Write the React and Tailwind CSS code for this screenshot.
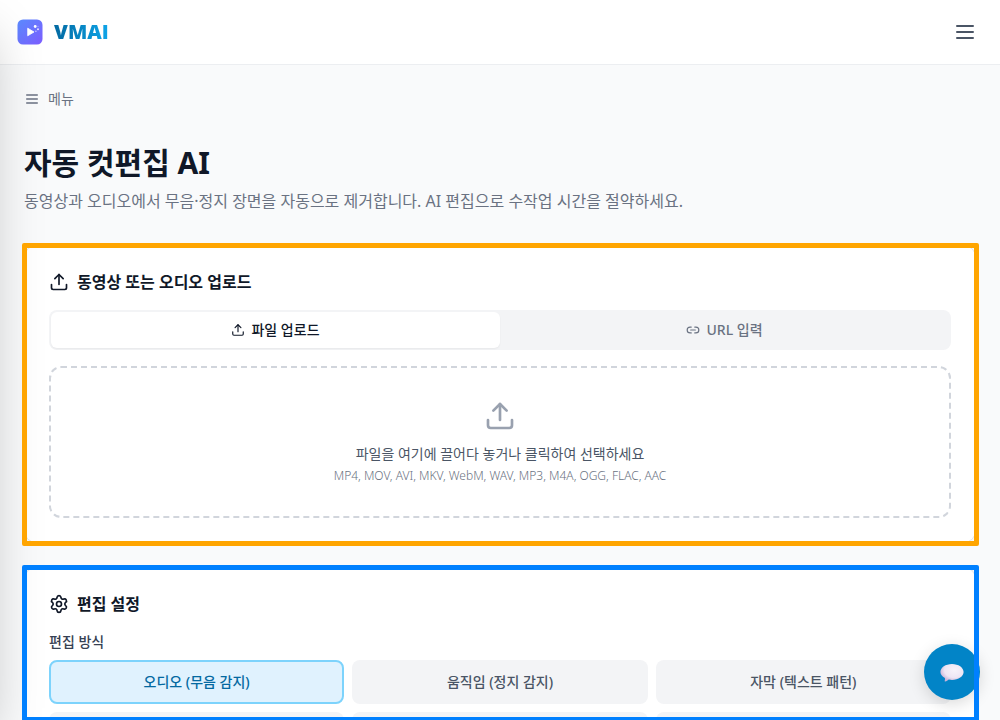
import { useState } from "react";
import { Link2, Settings, Upload } from "lucide-react";

const MODES = ["오디오 (무음 감지)", "움직임 (정지 감지)", "자막 (텍스트 패턴)"];

function Logo() {
  return (
    <svg viewBox="0 0 26 26" className="size-[26px]" aria-hidden="true">
      <defs>
        <linearGradient id="logo-fill" x1="0" y1="0" x2="1" y2="1">
          <stop offset="0" stopColor="#5b8cff" />
          <stop offset="1" stopColor="#7c5cff" />
        </linearGradient>
      </defs>
      <rect x="0.5" y="0.5" width="25" height="25" rx="5.5" fill="url(#logo-fill)" />
      <path d="M10.700 9.200v7.600l6.300-3.800z" fill="#fff" stroke="#fff" strokeWidth="0.8" strokeLinejoin="round" />
      <circle cx="18.2" cy="7.5" r="1.400" fill="#fff" />
      <circle cx="21" cy="10.300" r="0.95" fill="#fff" opacity="0.85" />
      <circle cx="18.900" cy="12.200" r="0.7" fill="#fff" opacity="0.7" />
      <circle cx="21" cy="7.300" r="0.5" fill="#fff" opacity="0.6" />
    </svg>
  );
}

function MenuIcon({ className }) {
  return (
    <svg viewBox="0 0 24 24" fill="none" stroke="currentColor" strokeWidth="2" strokeLinecap="round" className={className} aria-hidden="true">
      <path d="M4 6h16M4 12h16M4 18h16" />
    </svg>
  );
}

function SpeechBubble() {
  return (
    <svg viewBox="0 0 24 20" className="h-5 w-6" aria-hidden="true">
      <defs>
        <radialGradient id="bubble-fill" cx="0.6" cy="0.35" r="0.65">
          <stop offset="0" stopColor="#f7f3fa" />
          <stop offset="0.65" stopColor="#eee6f4" />
          <stop offset="1" stopColor="#c8b2d8" />
        </radialGradient>
      </defs>
      <path d="M12 2c6.500 0 11.600 3.600 11.600 8s-5.100 7.900-11.600 7.900c-1.200 0-2.200-.1-3.200-.3-.9.800-2.300 1.700-3.600 2-.5.100-.7-.3-.5-.8.300-.9.400-1.900.2-2.900C2.100 14.500.4 12.400.4 10 .4 5.600 5.500 2 12 2z" fill="url(#bubble-fill)" />
    </svg>
  );
}

export default function App() {
  const [tab, setTab] = useState("file");
  const [mode, setMode] = useState(0);

  return (
    <div className="flex h-screen flex-col overflow-hidden bg-[#f9fafb] font-['Noto_Sans','Noto_Sans_CJK_KR',sans-serif] text-gray-900">
      <header className="flex h-[65px] shrink-0 items-center justify-between border-b border-[#eceef1] bg-white pr-[23px] pl-[17px]">
        <a href="#home" className="flex items-center gap-[11px]">
          <Logo />
          <span className="bg-linear-to-r from-[#0369a1] to-[#0ea5e9] bg-clip-text font-['Open_Sans','Noto_Sans',sans-serif] text-xl leading-7 font-extrabold text-transparent">VMAI</span>
        </a>
        <button type="button" aria-label="메뉴 열기" className="text-gray-600">
          <MenuIcon className="size-6" />
        </button>
      </header>

      <main className="flex min-h-0 flex-1 flex-col px-6 pt-6">
        <nav className="mb-9 flex">
          <button type="button" className="flex items-center gap-2 text-sm leading-5 text-gray-500">
            <MenuIcon className="size-4" />
            메뉴
          </button>
        </nav>

        <h1 className="mb-2 text-3xl leading-9 font-bold">자동 컷편집 AI</h1>
        <p className="mb-8 text-base leading-6 text-gray-500">
          동영상과 오디오에서 무음·정지 장면을 자동으로 제거합니다. AI 편집으로 수작업 시간을 절약하세요.
        </p>

        <section className="relative mb-6 shrink-0">
          <div className="rounded-xl border border-gray-200 bg-white p-6">
            <h2 className="mb-4 flex items-center gap-2 text-base leading-6 font-semibold">
              <Upload className="size-5" />
              동영상 또는 오디오 업로드
            </h2>
            <div className="mb-4 grid h-10 grid-cols-2 rounded-lg bg-gray-100 p-[2px] text-sm font-medium">
              <button
                type="button"
                onClick={() => setTab("file")}
                className={tab === "file" ? "flex items-center justify-center gap-[6px] rounded-md bg-white text-gray-900 shadow-xs" : "flex items-center justify-center gap-[6px] rounded-md text-gray-500"}
              >
                <Upload className="size-[14px]" />
                파일 업로드
              </button>
              <button
                type="button"
                onClick={() => setTab("url")}
                className={tab === "url" ? "flex items-center justify-center gap-[6px] rounded-md bg-white text-gray-900 shadow-xs" : "flex items-center justify-center gap-[6px] rounded-md text-gray-500"}
              >
                <Link2 className="size-[14px]" />
                URL 입력
              </button>
            </div>
            <button type="button" className="flex w-full flex-col items-center rounded-xl border-2 border-dashed border-gray-300 px-6 py-8">
              <Upload className="mb-3 size-8 text-gray-400" />
              <span className="mb-1 text-sm leading-5 text-gray-600">파일을 여기에 끌어다 놓거나 클릭하여 선택하세요</span>
              <span className="text-xs leading-4 font-light text-gray-500">MP4, MOV, AVI, MKV, WebM, WAV, MP3, M4A, OGG, FLAC, AAC</span>
            </button>
          </div>
          <div className="pointer-events-none absolute -top-[2px] -right-[3px] -bottom-[3px] -left-[2px] z-40 rounded-[2px] border-5 border-[#ffa500]" />
        </section>

        <section className="relative min-h-0 flex-1">
          <div className="h-full overflow-hidden rounded-t-xl border border-b-0 border-gray-200 bg-white px-6 pt-6">
            <h2 className="mb-4 flex items-center gap-2 text-base leading-6 font-semibold">
              <Settings className="size-5" />
              편집 설정
            </h2>
            <h3 id="mode-label" className="mb-2 text-sm leading-5 font-medium text-gray-700">편집 방식</h3>
            <div role="group" aria-labelledby="mode-label" className="grid grid-cols-3 gap-2">
              {MODES.map((label, i) => (
                <button
                  key={label}
                  type="button"
                  aria-pressed={mode === i}
                  onClick={() => setMode(i)}
                  className={
                    mode === i
                      ? "h-11 rounded-lg border-2 border-[#7dd3fc] bg-[#e0f2fe] text-sm font-medium text-[#0369a1]"
                      : "h-11 rounded-lg border-2 border-transparent bg-gray-100 text-sm font-medium text-gray-600"
                  }
                >
                  {label}
                </button>
              ))}
              <div className="h-11 rounded-lg bg-gray-100" />
              <div className="h-11 rounded-lg bg-gray-100" />
              <div className="h-11 rounded-lg bg-gray-100" />
            </div>
          </div>
          <div className="pointer-events-none absolute -top-[2px] -right-[3px] -bottom-[2px] -left-[2px] z-40 rounded-[2px] border-5 border-[#0080ff]" />
        </section>
      </main>

      <aside aria-hidden="true" className="fixed inset-y-0 -left-72 z-20 w-72 bg-white shadow-2xl" />

      <button type="button" aria-label="채팅 상담" className="fixed right-5 bottom-5 z-30 flex size-14 items-center justify-center rounded-full bg-[#0284c7] shadow-[0_4px_16px_rgba(0,0,0,0.15)]">
        <SpeechBubble />
      </button>
    </div>
  );
}
